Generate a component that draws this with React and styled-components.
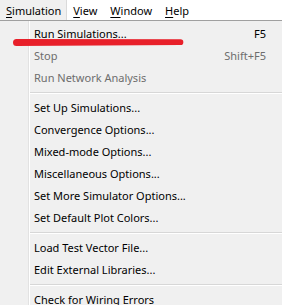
import React from "react";
import styled, { createGlobalStyle } from "styled-components";

const Global = createGlobalStyle`
  html, body { margin: 0; padding: 0; background: #f0f0f0; }
  body { font-family: "Noto Sans", "Open Sans", sans-serif; font-size: 11px; color: #000; overflow: hidden; }
`;

const Page = styled.div`
  display: flex;
  flex-direction: column;
  width: 282px;
  height: 305px;
  overflow: hidden;
`;

const MenuBar = styled.div`
  display: flex;
  flex-shrink: 0;
  height: 20px;
  background: #fff;
`;

const MenuTitle = styled.div`
  display: flex;
  align-items: center;
  padding: 0 ${(p) => (p.$active ? "5px" : "6px")} 0 6px;
  background: ${(p) => (p.$active ? "#f0f0f0" : "transparent")};
  border-right: 1px solid ${(p) => (p.$active ? "#dadada" : "transparent")};
`;

const Mnemonic = styled.span`
  text-decoration: underline;
  text-underline-offset: 2px;
  text-decoration-thickness: 1px;
`;

const Dropdown = styled.div`
  position: relative;
  flex: 1 0 auto;
  border-top: 1px solid #a0a0a0;
  padding-top: 2px;
  background: linear-gradient(
    to right,
    #f0f0f0 0,
    #f0f0f0 28px,
    #e2e2e2 28px,
    #e2e2e2 29px,
    #ffffff 29px,
    #ffffff 30px,
    #f0f0f0 30px
  );
`;

const Item = styled.div`
  display: flex;
  align-items: center;
  justify-content: space-between;
  flex-shrink: 0;
  box-sizing: border-box;
  height: 22px;
  padding: 0 16px 2px 34px;
  color: ${(p) => (p.$disabled ? "#6d6d6d" : "#000")};
  white-space: nowrap;
`;

const Separator = styled.div`
  height: 8px;
  margin-left: 30px;
  display: flex;
  flex-direction: column;
  justify-content: center;
  &::before {
    content: "";
    display: block;
    height: 1px;
    background: #d7d7d7;
  }
  &::after {
    content: "";
    display: block;
    height: 1px;
    background: #fff;
  }
`;

const Stroke = styled.svg`
  position: absolute;
  left: 0;
  top: -21px;
  width: 282px;
  height: 60px;
  pointer-events: none;
`;

const groups = [
  [
    { label: "Run Simulations...", key: "F5" },
    { label: "Stop", key: "Shift+F5", disabled: true },
    { label: "Run Network Analysis", disabled: true },
  ],
  [
    { label: "Set Up Simulations..." },
    { label: "Convergence Options..." },
    { label: "Mixed-mode Options..." },
    { label: "Miscellaneous Options..." },
    { label: "Set More Simulator Options..." },
    { label: "Set Default Plot Colors..." },
  ],
  [{ label: "Load Test Vector File..." }, { label: "Edit External Libraries..." }],
  [{ label: "Check for Wiring Errors" }],
];

export default function App() {
  return (
    <Page>
      <Global />
      <MenuBar>
        <MenuTitle $active>
          <span>
            <Mnemonic>S</Mnemonic>imulation
          </span>
        </MenuTitle>
        <MenuTitle>
          <span>
            <Mnemonic>V</Mnemonic>iew
          </span>
        </MenuTitle>
        <MenuTitle>
          <span>
            <Mnemonic>W</Mnemonic>indow
          </span>
        </MenuTitle>
        <MenuTitle>
          <span>
            <Mnemonic>H</Mnemonic>elp
          </span>
        </MenuTitle>
      </MenuBar>
      <Dropdown>
        {groups.map((g, gi) => (
          <React.Fragment key={gi}>
            {gi > 0 && <Separator />}
            {g.map((it) => (
              <Item key={it.label} $disabled={it.disabled}>
                <span>{it.label}</span>
                {it.key && <span>{it.key}</span>}
              </Item>
            ))}
          </React.Fragment>
        ))}
        <Stroke viewBox="0 0 282 60">
          <path
            d="M16.5,39 L180.5,39.3 A2.8,2.8 0 0 1 180.5,45 L16.5,46 A3.5,3.5 0 0 1 16.5,39 Z"
            fill="#e8202a"
          />
        </Stroke>
      </Dropdown>
    </Page>
  );
}
